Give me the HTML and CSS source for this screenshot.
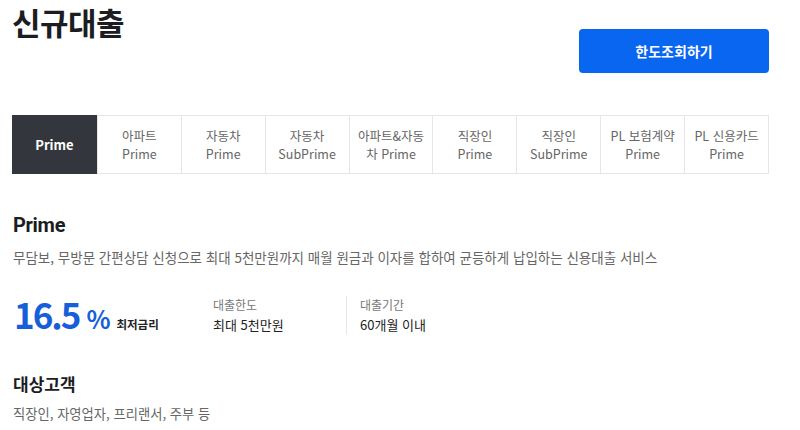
FILE: index.html
```html
<!DOCTYPE html>
<html lang="ko">
<head>
<meta charset="utf-8">
<link rel="stylesheet" href="styles.css">
</head>
<body>
<div class="page">
  <header class="head">
    <h1 class="title">신규대출</h1>
    <button class="btn">한도조회하기</button>
  </header>
  <nav class="tabs">
    <div class="tab active">Prime</div>
    <div class="tab">아파트<br>Prime</div>
    <div class="tab">자동차<br>Prime</div>
    <div class="tab">자동차<br>SubPrime</div>
    <div class="tab">아파트&amp;자동<br>차 Prime</div>
    <div class="tab">직장인<br>Prime</div>
    <div class="tab">직장인<br>SubPrime</div>
    <div class="tab">PL 보험계약<br>Prime</div>
    <div class="tab">PL 신용카드<br>Prime</div>
  </nav>
  <section class="prod">
    <h2 class="prod-title">Prime</h2>
    <p class="desc">무담보, 무방문 간편상담 신청으로 최대 5천만원까지 매월 원금과 이자를 합하여 균등하게 납입하는 신용대출 서비스</p>
    <div class="stats">
      <div class="rate"><span class="num">16.5</span><span class="pct">%</span><span class="rate-label">최저금리</span></div>
      <div class="stat">
        <div class="stat-label">대출한도</div>
        <div class="stat-val">최대 5천만원</div>
      </div>
      <div class="stat stat-div">
        <div class="stat-label">대출기간</div>
        <div class="stat-val">60개월 이내</div>
      </div>
    </div>
    <h3 class="sub-title">대상고객</h3>
    <p class="desc desc-sm">직장인, 자영업자, 프리랜서, 주부 등</p>
  </section>
</div>
</body>
</html>
```
FILE: styles.css
```css
* { box-sizing: border-box; }
body {
  margin: 0;
  background: #fff;
  font-family: "Noto Sans CJK KR", "Noto Sans", sans-serif;
  color: #222;
}
.page {
  width: 757px;
  margin-left: 12px;
}
.head {
  display: flex;
  justify-content: space-between;
  align-items: flex-start;
}
.title {
  margin: 0;
  padding-top: 1px;
  font-size: 31px;
  line-height: 42px;
  font-weight: 700;
  color: #1b1d22;
  letter-spacing: -0.5px;
}
.btn {
  margin-top: 29px;
  width: 190px;
  height: 44px;
  border: 0;
  border-radius: 4px;
  background: #0966f0;
  color: #fff;
  font-family: inherit;
  font-size: 14px;
  font-weight: 700;
}
.tabs {
  margin-top: 42px;
  display: grid;
  grid-template-columns: repeat(9, 1fr);
  border: 1px solid #e6e6e6;
  height: 59px;
}
.tab {
  display: flex;
  align-items: center;
  justify-content: center;
  text-align: center;
  font-size: 12.5px;
  line-height: 18px;
  color: #666;
  border-left: 1px solid #e6e6e6;
}
.tab:first-child { border-left: 0; }
.tab.active {
  background: #33363d;
  color: #fff;
  font-weight: 700;
  font-size: 13px;
  margin: -1px 0 -1px -1px;
}
.prod { padding-left: 1px; }
.prod-title {
  margin: 37px 0 0;
  font-family: Roboto, "Noto Sans CJK KR", sans-serif;
  font-size: 20px;
  line-height: 28px;
  font-weight: 700;
  color: #1b1d22;
  letter-spacing: -0.3px;
}
.desc {
  margin: 8px 0 0;
  font-size: 13.5px;
  line-height: 20px;
  color: #666;
}
.stats {
  margin-top: 27px;
  display: flex;
  align-items: center;
}
.rate {
  width: 200px;
  display: flex;
  align-items: baseline;
  color: #175fd9;
  padding-left: 1px;
}
.num {
  font-size: 35px;
  font-weight: 700;
  line-height: 40px;
  letter-spacing: -2px;
}
.pct {
  font-size: 25px;
  font-weight: 700;
  margin-left: 7px;
}
.rate-label {
  margin-left: 6px;
  font-size: 11.5px;
  font-weight: 700;
  color: #222;
}
.stat {
  width: 133px;
}
.stat-label {
  font-size: 12px;
  line-height: 18px;
  color: #777;
}
.stat-val {
  font-size: 13px;
  line-height: 20px;
  color: #222;
  margin-top: 1px;
}
.stat-div {
  border-left: 1px solid #e6e6e6;
  padding-left: 13px;
}
.sub-title {
  margin: 36px 0 0;
  font-size: 17px;
  line-height: 24px;
  font-weight: 700;
  color: #1b1d22;
}
.desc-sm {
  margin-top: 8px;
  font-size: 13.3px;
}
```
